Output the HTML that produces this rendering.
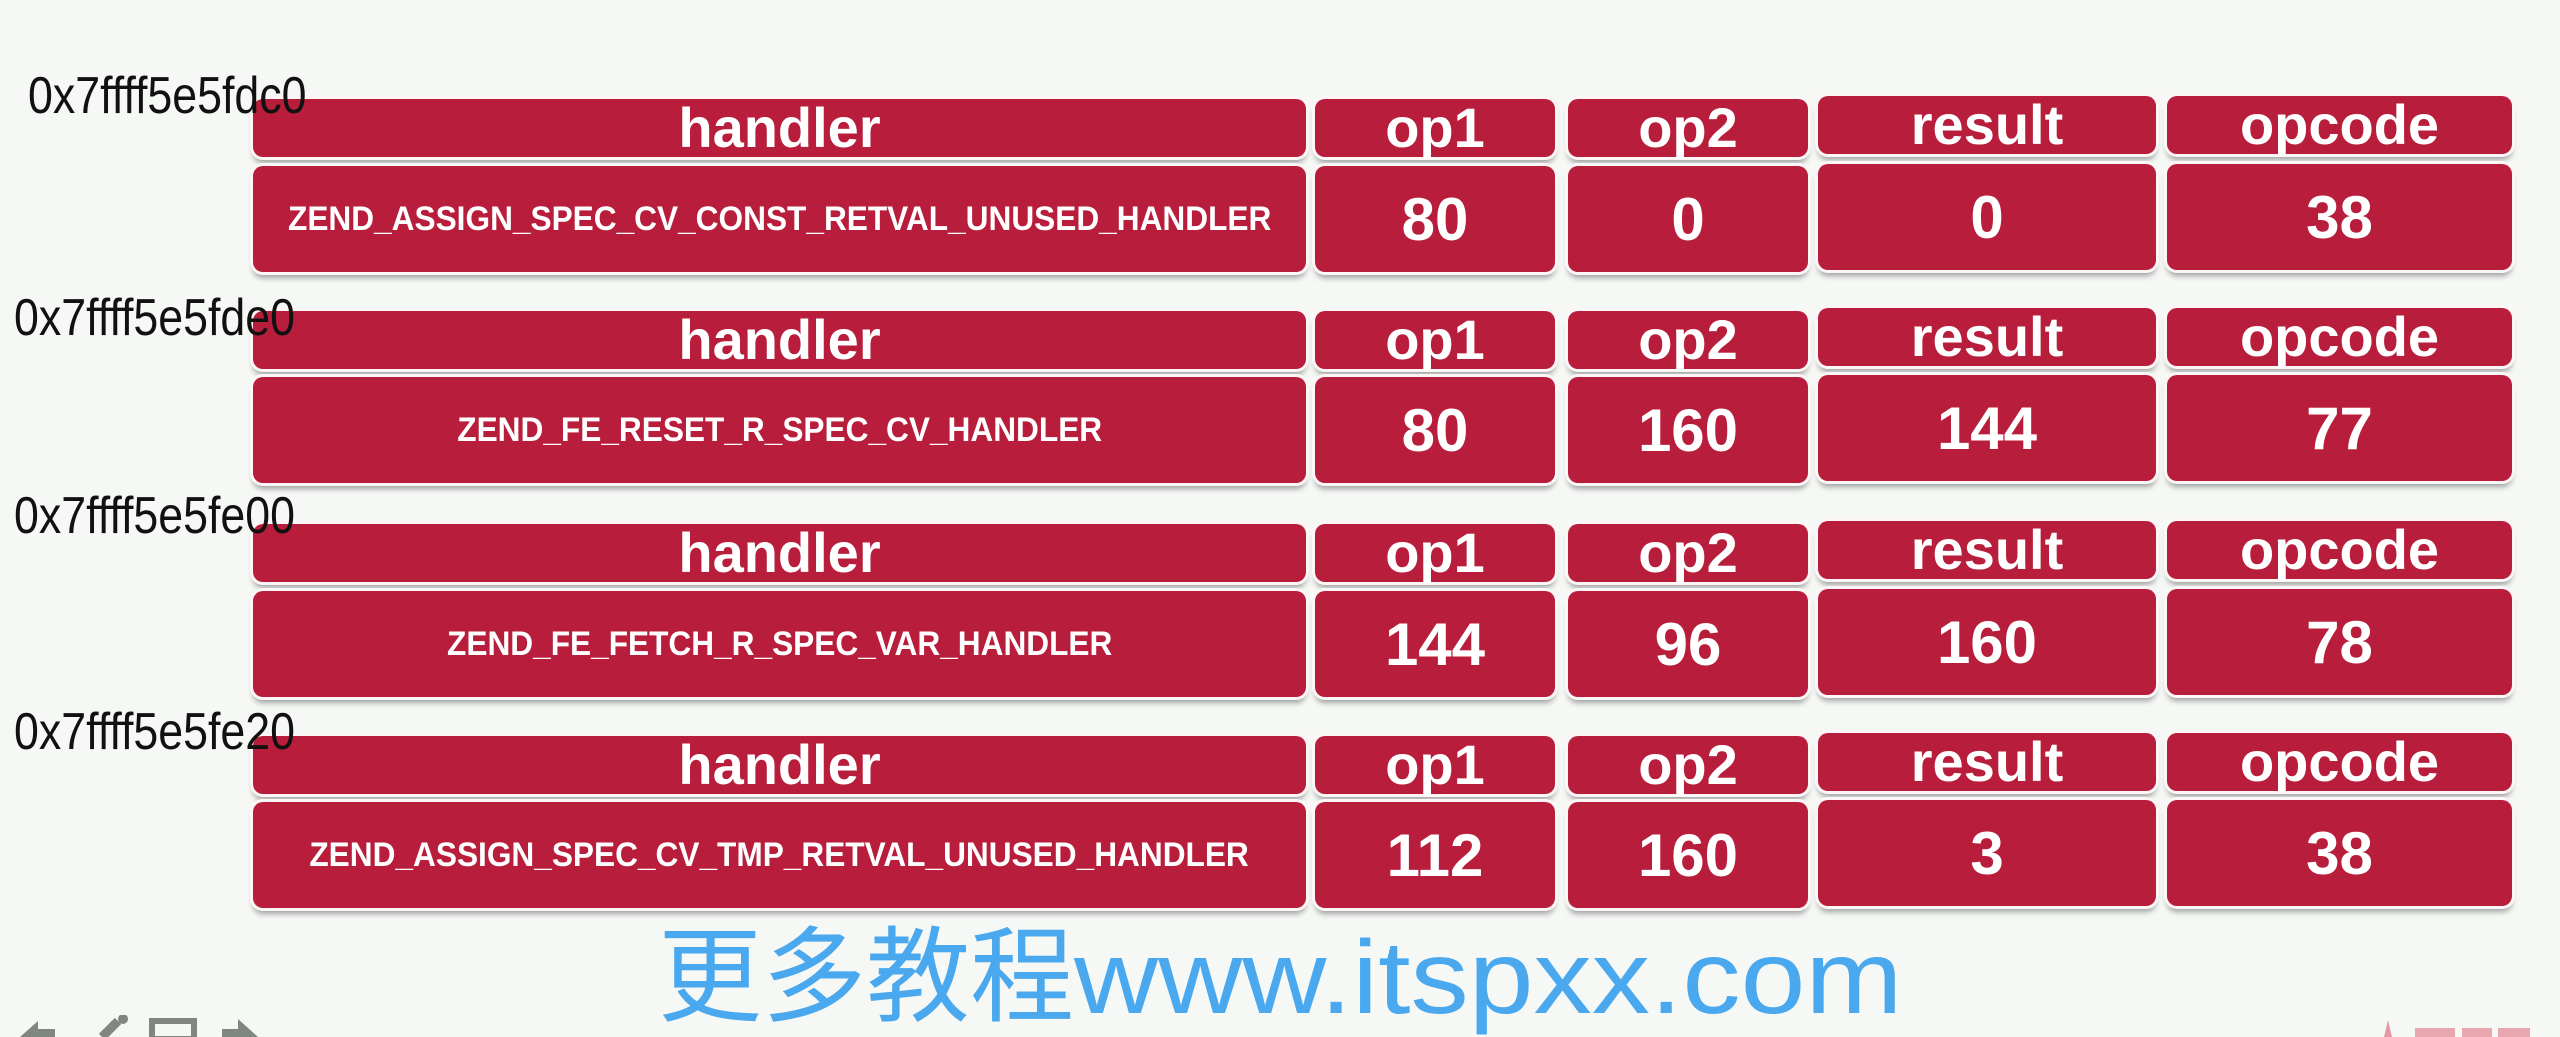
<!DOCTYPE html>
<html><head><meta charset="utf-8"><style>
body{margin:0;width:2560px;height:1037px;background:#f6f8f6;position:relative;overflow:hidden;font-family:"Liberation Sans",sans-serif}
.c{position:absolute;background:#b81d3b;border-radius:10px;box-shadow:0 0 0 3px #fdf6f6,0 6px 6px rgba(0,0,0,.35);display:flex;align-items:center;justify-content:center;color:#fff;font-weight:bold}
.h{height:58px;font-size:56px;line-height:1}
.d{height:106px;font-size:60px}
.n{font-size:34px}
.n span{display:inline-block;transform:scaleX(.93)}
.lbl{position:absolute;z-index:5;font-size:52px;color:#111;transform:scaleX(.86);transform-origin:left top;line-height:1}
.wm{position:absolute;left:658px;top:926px;font-size:104px;color:#4aa8ee;font-family:"Liberation Sans","Noto Sans CJK SC",sans-serif;line-height:1;white-space:nowrap}
.wm span{display:inline-block;transform:scaleX(1.12);transform-origin:left center}
</style></head><body>

<div class="lbl" style="left:28px;top:70px">0x7ffff5e5fdc0</div>
<div class="lbl" style="left:14px;top:292px">0x7ffff5e5fde0</div>
<div class="lbl" style="left:14px;top:490px">0x7ffff5e5fe00</div>
<div class="lbl" style="left:14px;top:706px">0x7ffff5e5fe20</div>

<div class="c h" style="left:253px;top:99px;width:1053px">handler</div>
<div class="c h" style="left:1315px;top:99px;width:240px">op1</div>
<div class="c h" style="left:1568px;top:99px;width:240px">op2</div>
<div class="c h" style="left:1818px;top:96px;width:338px">result</div>
<div class="c h" style="left:2167px;top:96px;width:345px">opcode</div>
<div class="c d n" style="left:253px;top:166px;width:1053px"><span>ZEND_ASSIGN_SPEC_CV_CONST_RETVAL_UNUSED_HANDLER</span></div>
<div class="c d" style="left:1315px;top:166px;width:240px">80</div>
<div class="c d" style="left:1568px;top:166px;width:240px">0</div>
<div class="c d" style="left:1818px;top:164px;width:338px">0</div>
<div class="c d" style="left:2167px;top:164px;width:345px">38</div>

<div class="c h" style="left:253px;top:311px;width:1053px">handler</div>
<div class="c h" style="left:1315px;top:311px;width:240px">op1</div>
<div class="c h" style="left:1568px;top:311px;width:240px">op2</div>
<div class="c h" style="left:1818px;top:308px;width:338px">result</div>
<div class="c h" style="left:2167px;top:308px;width:345px">opcode</div>
<div class="c d n" style="left:253px;top:377px;width:1053px"><span>ZEND_FE_RESET_R_SPEC_CV_HANDLER</span></div>
<div class="c d" style="left:1315px;top:377px;width:240px">80</div>
<div class="c d" style="left:1568px;top:377px;width:240px">160</div>
<div class="c d" style="left:1818px;top:375px;width:338px">144</div>
<div class="c d" style="left:2167px;top:375px;width:345px">77</div>

<div class="c h" style="left:253px;top:524px;width:1053px">handler</div>
<div class="c h" style="left:1315px;top:524px;width:240px">op1</div>
<div class="c h" style="left:1568px;top:524px;width:240px">op2</div>
<div class="c h" style="left:1818px;top:521px;width:338px">result</div>
<div class="c h" style="left:2167px;top:521px;width:345px">opcode</div>
<div class="c d n" style="left:253px;top:591px;width:1053px"><span>ZEND_FE_FETCH_R_SPEC_VAR_HANDLER</span></div>
<div class="c d" style="left:1315px;top:591px;width:240px">144</div>
<div class="c d" style="left:1568px;top:591px;width:240px">96</div>
<div class="c d" style="left:1818px;top:589px;width:338px">160</div>
<div class="c d" style="left:2167px;top:589px;width:345px">78</div>

<div class="c h" style="left:253px;top:736px;width:1053px">handler</div>
<div class="c h" style="left:1315px;top:736px;width:240px">op1</div>
<div class="c h" style="left:1568px;top:736px;width:240px">op2</div>
<div class="c h" style="left:1818px;top:733px;width:338px">result</div>
<div class="c h" style="left:2167px;top:733px;width:345px">opcode</div>
<div class="c d n" style="left:253px;top:802px;width:1053px"><span>ZEND_ASSIGN_SPEC_CV_TMP_RETVAL_UNUSED_HANDLER</span></div>
<div class="c d" style="left:1315px;top:802px;width:240px">112</div>
<div class="c d" style="left:1568px;top:802px;width:240px">160</div>
<div class="c d" style="left:1818px;top:800px;width:338px">3</div>
<div class="c d" style="left:2167px;top:800px;width:345px">38</div>

<div class="wm">更多教程<span>www.itspxx.com</span></div>

<svg style="position:absolute;left:0;top:1015px" width="300" height="22">
<path d="M20 22 L38 6 L38 14 L55 14 L55 22Z" fill="#808680"/>
<path d="M102 22 L118 6" stroke="#808680" stroke-width="9"/>
<circle cx="123" cy="4" r="5" fill="#808680"/>
<rect x="152" y="6" width="42" height="18" fill="none" stroke="#808680" stroke-width="6"/>
<path d="M222 22 L222 14 L238 14 L238 4 L258 22Z" fill="#808680"/>
</svg>
<svg style="position:absolute;left:2370px;top:1018px" width="180" height="19">
<path d="M14 19 L18 2 L22 19Z" fill="#e07080" opacity=".7"/>
<rect x="45" y="10" width="40" height="9" fill="#e07080" opacity=".6"/>
<rect x="92" y="10" width="30" height="9" fill="#e07080" opacity=".6"/>
<rect x="128" y="10" width="32" height="9" fill="#e07080" opacity=".6"/>
</svg>
</body></html>
